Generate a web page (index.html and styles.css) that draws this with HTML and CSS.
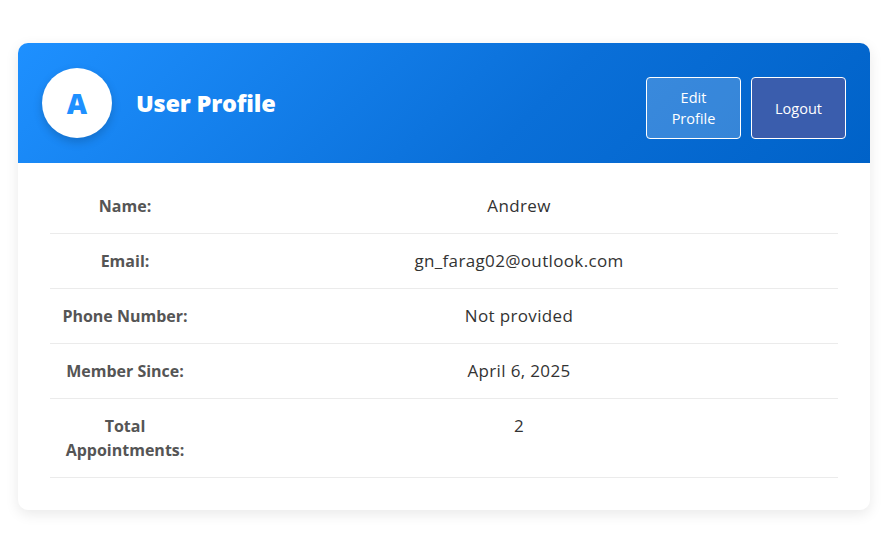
FILE: index.html
```html
<!DOCTYPE html>
<html>
<head>
<meta charset="utf-8">
<link rel="stylesheet" href="styles.css">
</head>
<body>
<div class="page">
  <div class="card">
    <div class="card-header">
      <div class="identity">
        <div class="avatar">A</div>
        <h1 class="title">User Profile</h1>
      </div>
      <div class="actions">
        <button class="btn btn-edit">Edit<br>Profile</button>
        <button class="btn btn-logout">Logout</button>
      </div>
    </div>
    <div class="card-body">
      <table class="info">
        <tr><th>Name:</th><td>Andrew</td></tr>
        <tr><th>Email:</th><td>gn_farag02@outlook.com</td></tr>
        <tr><th>Phone Number:</th><td>Not provided</td></tr>
        <tr><th>Member Since:</th><td>April 6, 2025</td></tr>
        <tr><th>Total Appointments:</th><td>2</td></tr>
      </table>
    </div>
  </div>
</div>
</body>
</html>
```

FILE: styles.css
```css
* { box-sizing: border-box; }
html, body { margin: 0; padding: 0; background: #fff; }
body { font-family: "Open Sans", "Liberation Sans", sans-serif; color: #333; }
.page { padding: 43px 12px 24px 18px; }
.card {
  width: 852px;
  background: #fff;
  border-radius: 10px;
  overflow: hidden;
  box-shadow: 0 4px 14px rgba(0,0,0,0.09);
}
.card-header {
  height: 120px;
  padding: 0 24px;
  display: flex;
  align-items: center;
  justify-content: space-between;
  background: linear-gradient(135deg, #1e90ff 0%, #0a6fd8 60%, #0062c8 100%);
}
.identity { display: flex; align-items: center; gap: 24px; }
.avatar {
  width: 70px; height: 70px; border-radius: 50%;
  background: #fff;
  color: #1e90ff;
  font-weight: 800;
  font-size: 28px;
  display: flex; align-items: center; justify-content: center;
  box-shadow: 0 4px 10px rgba(0,0,0,0.18);
}
.title {
  margin: 0;
  color: #fff;
  font-size: 23.5px;
  font-weight: 800;
  letter-spacing: -0.2px;
}
.actions { display: flex; gap: 10px; margin-top: 10px; }
.btn {
  width: 95px; height: 62px;
  border: 1px solid #fff;
  border-radius: 4px;
  color: #fff;
  font-family: inherit;
  font-size: 14.5px;
  line-height: 21px;
  cursor: pointer;
}
.btn-edit { background: rgba(255,255,255,0.2); }
.btn-logout { background: #3a5dad; }
.card-body { padding: 16px 32px 32px; }
.info { width: 100%; border-collapse: collapse; }
.info tr { border-bottom: 1px solid #ebebeb; }
.info th, .info td {
  padding: 15px 11px;
  line-height: 24px;
  vertical-align: top;
  text-align: center;
}
.info th {
  width: 150px;
  font-size: 16px;
  font-weight: 700;
  color: #555;
}
.info td { font-size: 17px; letter-spacing: 0.35px; color: #333; }
```
